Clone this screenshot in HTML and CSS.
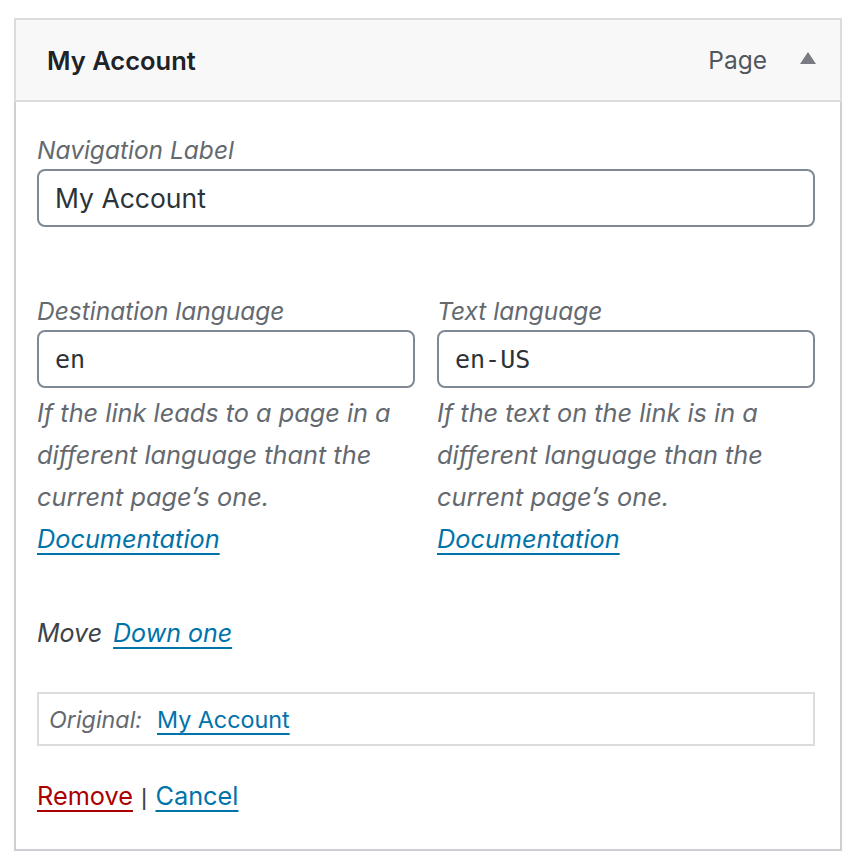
FILE: index.html
```html
<!DOCTYPE html>
<html lang="en">
<head>
<meta charset="utf-8">
<title>My Account</title>
<link rel="stylesheet" href="styles.css">
</head>
<body>
<div class="menu-item">
  <div class="handle">
    <span class="item-title">My Account</span>
    <span class="item-controls">
      <span class="item-type">Page</span>
      <svg class="arrow" width="16" height="12" viewBox="0 0 16 12" aria-hidden="true"><polygon points="8,0 16,12 0,12" fill="#787c82"/></svg>
    </span>
  </div>
  <div class="settings">
    <div class="field">
      <label class="label">Navigation Label</label>
      <input class="input" type="text" value="My Account">
    </div>
    <div class="cols">
      <div class="field">
        <label class="label">Destination language</label>
        <input class="input mono" type="text" value="en">
        <p class="desc">If the link leads to a page in a different language thant the current page’s one.<br><a href="#" class="link">Documentation</a></p>
      </div>
      <div class="field">
        <label class="label">Text language</label>
        <input class="input mono" type="text" value="en-US">
        <p class="desc">If the text on the link is in a different language than the current page’s one.<br><a href="#" class="link">Documentation</a></p>
      </div>
    </div>
    <p class="move">Move <a href="#" class="link">Down one</a></p>
    <div class="original">
      <span class="orig-label">Original:</span>
      <a href="#" class="orig-link">My Account</a>
    </div>
    <p class="actions"><a href="#" class="remove">Remove</a> <span class="sep">|</span> <a href="#" class="cancel">Cancel</a></p>
  </div>
</div>
</body>
</html>
```
FILE: styles.css
```css
* { box-sizing: border-box; }
body {
  margin: 0;
  background: #ffffff;
  font-family: Inter, "Noto Sans", "Liberation Sans", sans-serif;
  color: #32373c;
}
.menu-item {
  margin: 18px 0 0 14px;
  width: 828px;
}
.handle {
  height: 84px;
  background: #f8f8f8;
  border: 2px solid #dcdcde;
  display: flex;
  align-items: center;
  justify-content: space-between;
  padding: 0 24px 0 31px;
}
.item-title {
  font-size: 25.5px;
  font-weight: 600;
  color: #1d2327;
}
.item-controls {
  display: flex;
  align-items: center;
  gap: 33px;
}
.item-type {
  font-size: 24.5px;
  color: #50575e;
}
.arrow { display: block; margin-top: -4px; }
.settings {
  border: 2px solid #ccd0d4;
  border-top: none;
  padding: 30px 25px 31px 21px;
  box-shadow: 0 2px 2px rgba(0,0,0,0.04);
}
.field { display: flex; flex-direction: column; }
.label {
  font-size: 24.5px;
  line-height: 37px;
  font-style: italic;
  color: #646970;
}
.input {
  height: 58px;
  border: 2px solid #7e8993;
  border-radius: 8px;
  padding: 0 16px;
  font-family: Inter, "Noto Sans", sans-serif;
  font-size: 26.5px;
  color: #2c3338;
  background: #fff;
  width: 100%;
}
.input.mono {
  font-family: "DejaVu Sans Mono", "Liberation Mono", monospace;
  font-size: 25px;
}
.cols {
  margin-top: 66px;
  display: grid;
  grid-template-columns: 378px 378px;
  column-gap: 22px;
}
.desc {
  margin: 4px 0 0;
  font-size: 25.3px;
  line-height: 42px;
  font-style: italic;
  color: #646970;
}
.link {
  color: #0073aa;
  text-decoration: underline;
  text-underline-offset: 5px;
  text-decoration-thickness: 2px;
}
.move {
  margin: 52px 0 0;
  font-size: 25px;
  line-height: 42px;
  font-style: italic;
  color: #3c434a;
}
.move .link { margin-left: 4px; }
.original {
  margin-top: 38px;
  height: 54px;
  border: 2px solid #dcdcde;
  display: flex;
  align-items: center;
  padding: 0 10px;
  gap: 15px;
}
.orig-label {
  font-size: 23.3px;
  font-style: italic;
  color: #646970;
}
.orig-link {
  font-size: 23.3px;
  color: #0073aa;
  text-decoration: underline;
  text-underline-offset: 5px;
  text-decoration-thickness: 2px;
}
.actions {
  margin: 29px 0 0;
  font-size: 25.3px;
  line-height: 42px;
  color: #3c434a;
}
.sep {
  font-family: "Liberation Sans", sans-serif;
  font-size: 24px;
  margin: 0 1px;
}
.remove, .cancel {
  text-decoration: underline;
  text-underline-offset: 5px;
  text-decoration-thickness: 2px;
}
.remove { color: #a00; }
.cancel { color: #0073aa; }
```
